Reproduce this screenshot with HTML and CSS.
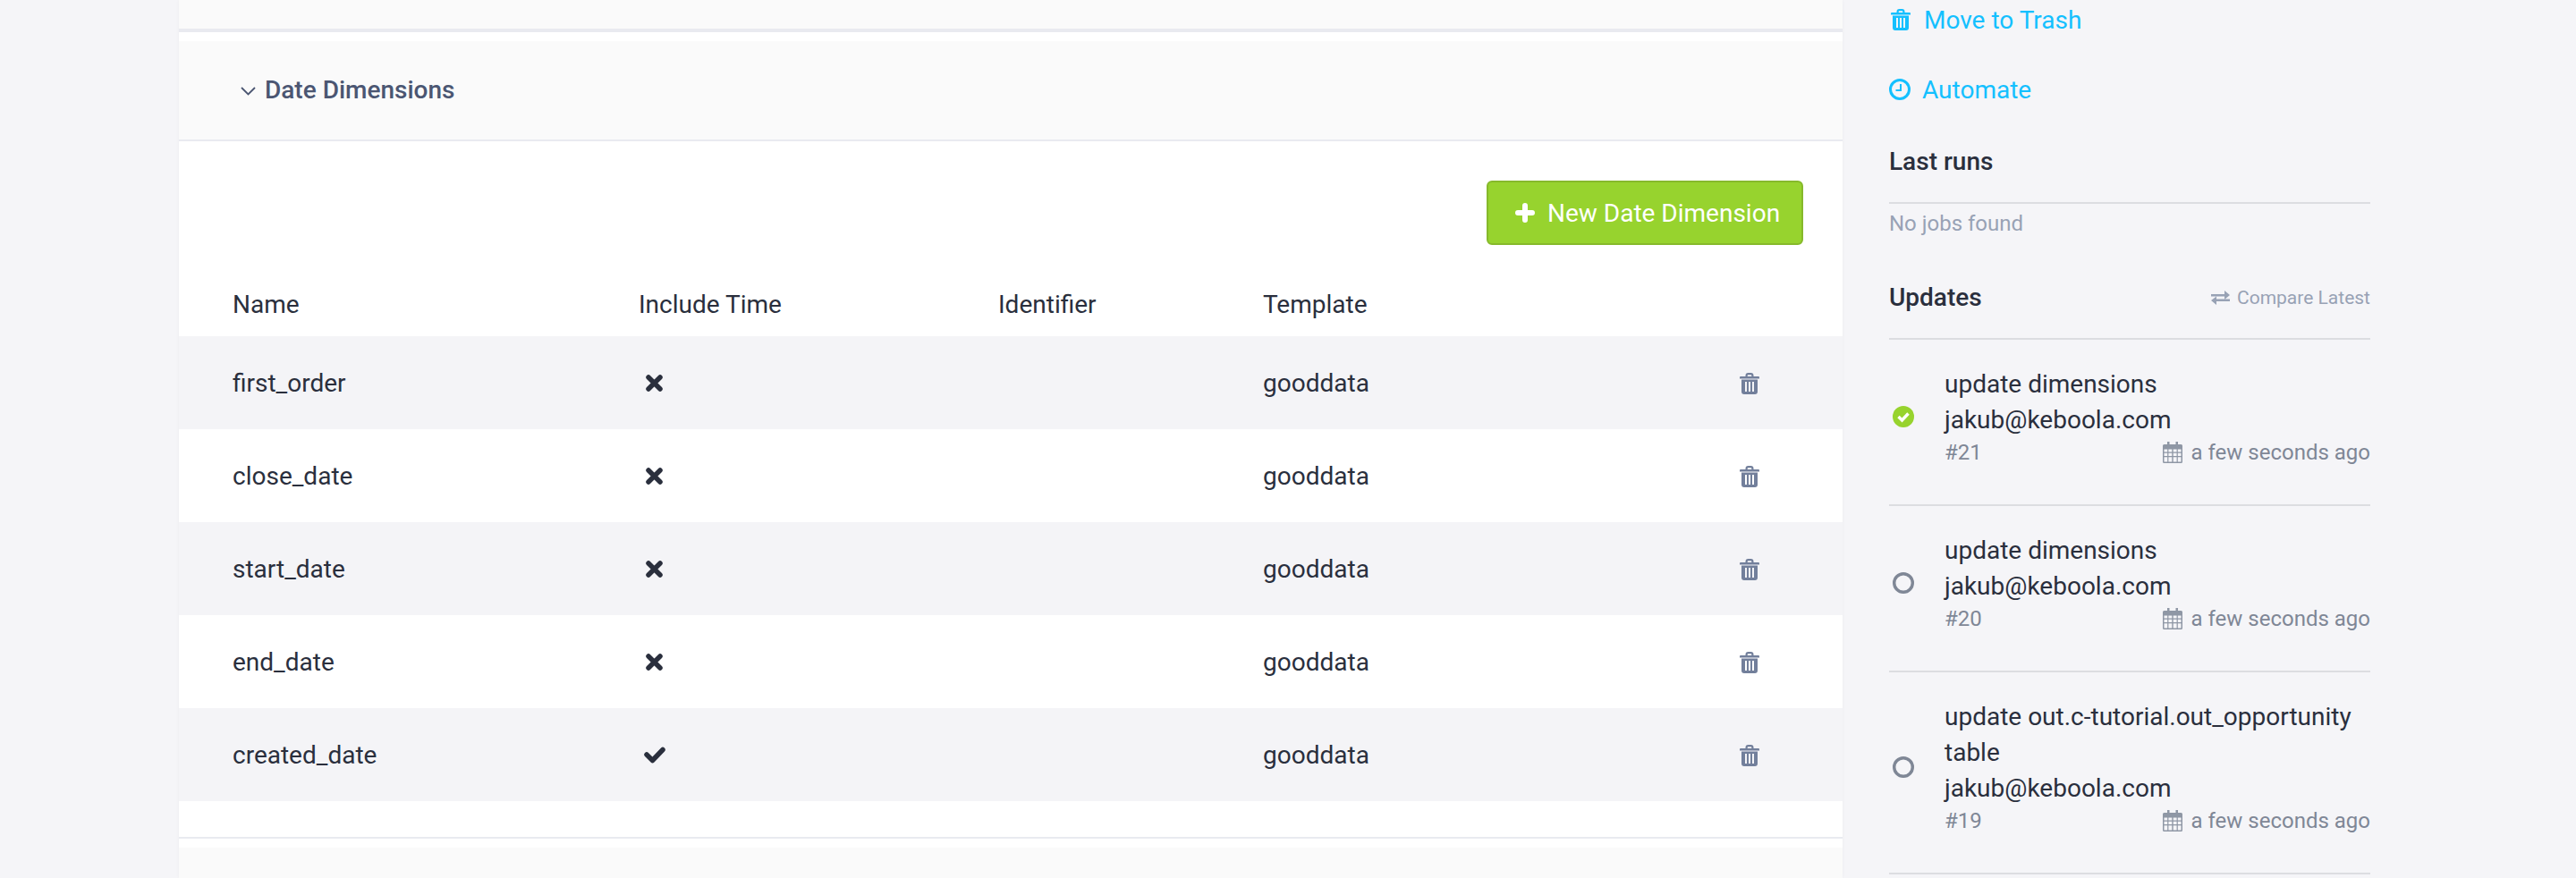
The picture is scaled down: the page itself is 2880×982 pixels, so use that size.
FILE: index.html
```html
<!DOCTYPE html>
<html lang="en">
<head>
    <meta charset="UTF-8">
    <meta name="viewport" content="width=device-width, initial-scale=1.0">
    <title>Date Dimensions</title>
    <link rel="stylesheet" href="styles.css">
</head>
<body>
    <svg class="icon-defs" aria-hidden="true">
        <symbol id="i-trash" viewBox="0 0 22 24">
            <path fill="currentColor" fill-rule="evenodd" d="M6.5 4V3A3 3 0 0 1 9.500 0h3a3 3 0 0 1 3 3v1H21a1 1 0 0 1 1 1v1.500H0V5a1 1 0 0 1 1-1zM8.700 4h4.600V3a.8.8 0 0 0-.8-.8h-3a.8.8 0 0 0-.8.8z"/>
            <path fill="currentColor" fill-rule="evenodd" d="M2 7.500h18V21a3 3 0 0 1-3 3H5a3 3 0 0 1-3-3zM6 10v11h2V10zM10 10v11h2V10zM14 10v11h2V10z"/>
        </symbol>
        <symbol id="i-calendar" viewBox="0 0 22 24">
            <path fill="currentColor" fill-rule="evenodd" d="M5 0h2.500v3h7V0H17v3h3.500A1.500 1.500 0 0 1 22 4.500v18a1.500 1.500 0 0 1-1.500 1.500h-19A1.500 1.500 0 0 1 0 22.500v-18A1.500 1.500 0 0 1 1.500 3H5zM1.500 8.500v3h3.700v-3zM6.400 8.500v3h3.900v-3zM11.700 8.500v3h3.900v-3zM16.800 8.500v3h3.700v-3zM1.500 12.800v3.200h3.700v-3.200zM6.400 12.800v3.200h3.900v-3.200zM11.700 12.800v3.200h3.900v-3.200zM16.800 12.800v3.200h3.700v-3.200zM1.500 17.300v5.200h3.700v-5.200zM6.400 17.300v5.200h3.900v-5.200zM11.700 17.300v5.200h3.900v-5.200zM16.800 17.300v5.200h3.700v-5.200z"/>
        </symbol>
        <symbol id="i-cross" viewBox="0 0 19 19">
            <path fill="none" stroke="currentColor" stroke-width="5.500" stroke-linecap="round" d="M3 3l13 13M16 3L3 16"/>
        </symbol>
        <symbol id="i-tick" viewBox="0 0 24 19">
            <path fill="none" stroke="currentColor" stroke-width="5.500" stroke-linecap="round" stroke-linejoin="round" d="M3 9l6.500 6.500L21 3.500"/>
        </symbol>
        <symbol id="i-empty" viewBox="0 0 24 24">
            <circle cx="12" cy="12" r="10.300" fill="none" stroke="currentColor" stroke-width="3.400"/>
        </symbol>
        <symbol id="i-success" viewBox="0 0 24 24">
            <circle cx="12" cy="12" r="12" fill="currentColor"/>
            <path fill="none" stroke="#fff" stroke-width="3.400" d="M6.500 12l4 4 7-7.500"/>
        </symbol>
    </svg>

    <div class="page">
        <main class="main-panel">
            <div class="panel-top"></div>

            <section class="dimensions">
                <div class="section-header">
                    <svg class="chevron" viewBox="0 0 17 10"><path fill="none" stroke="currentColor" stroke-width="1.800" d="M1 1l7.500 7.500L16 1"/></svg>
                    <h2>Date Dimensions</h2>
                </div>
                <div class="section-actions">
                    <button class="btn-new">
                        <svg class="plus" viewBox="0 0 22 22"><path fill="none" stroke="currentColor" stroke-width="6" stroke-linecap="round" d="M11 3v16M3 11h16"/></svg>
                        New Date Dimension
                    </button>
                </div>

                <div class="dim-row dim-head">
                    <div>Name</div>
                    <div>Include Time</div>
                    <div>Identifier</div>
                    <div>Template</div>
                </div>
                <div class="dim-row">
                    <div>first_order</div>
                    <div><svg class="bool cross"><use href="#i-cross"/></svg></div>
                    <div></div>
                    <div>gooddata</div>
                    <svg class="row-trash"><use href="#i-trash"/></svg>
                </div>
                <div class="dim-row">
                    <div>close_date</div>
                    <div><svg class="bool cross"><use href="#i-cross"/></svg></div>
                    <div></div>
                    <div>gooddata</div>
                    <svg class="row-trash"><use href="#i-trash"/></svg>
                </div>
                <div class="dim-row">
                    <div>start_date</div>
                    <div><svg class="bool cross"><use href="#i-cross"/></svg></div>
                    <div></div>
                    <div>gooddata</div>
                    <svg class="row-trash"><use href="#i-trash"/></svg>
                </div>
                <div class="dim-row">
                    <div>end_date</div>
                    <div><svg class="bool cross"><use href="#i-cross"/></svg></div>
                    <div></div>
                    <div>gooddata</div>
                    <svg class="row-trash"><use href="#i-trash"/></svg>
                </div>
                <div class="dim-row">
                    <div>created_date</div>
                    <div><svg class="bool tick"><use href="#i-tick"/></svg></div>
                    <div></div>
                    <div>gooddata</div>
                    <svg class="row-trash"><use href="#i-trash"/></svg>
                </div>
            </section>

            <div class="panel-bottom"></div>
        </main>

        <aside class="sidebar">
            <a class="action action-trash"><svg class="action-icon"><use href="#i-trash"/></svg>Move to Trash</a>
            <a class="action action-clock">
                <svg class="action-icon clock" viewBox="0 0 24 24"><circle cx="12" cy="12" r="10.500" fill="none" stroke="currentColor" stroke-width="3"/><path fill="none" stroke="currentColor" stroke-width="2" d="M13 6v7H7.500"/></svg>
                Automate
            </a>

            <h3 class="side-title runs-title">Last runs</h3>
            <div class="empty-note">No jobs found</div>

            <div class="side-title updates-title">
                <h3>Updates</h3>
                <a class="compare">
                    <svg class="compare-icon" viewBox="0 0 21 16"><path fill="currentColor" d="M0 4h15V0l6 5-6 5V6.500H0zM21 9.500H6V6.500v0L0 11l6 5v-4h15z"/></svg>
                    Compare Latest
                </a>
            </div>

            <div class="update">
                <svg class="status ok"><use href="#i-success"/></svg>
                <div class="update-body">
                    <div>update dimensions</div>
                    <div>jakub@keboola.com</div>
                    <div class="update-meta">
                        <span>#21</span>
                        <span class="when"><svg class="calendar"><use href="#i-calendar"/></svg>a few seconds ago</span>
                    </div>
                </div>
            </div>
            <div class="update">
                <svg class="status"><use href="#i-empty"/></svg>
                <div class="update-body">
                    <div>update dimensions</div>
                    <div>jakub@keboola.com</div>
                    <div class="update-meta">
                        <span>#20</span>
                        <span class="when"><svg class="calendar"><use href="#i-calendar"/></svg>a few seconds ago</span>
                    </div>
                </div>
            </div>
            <div class="update">
                <svg class="status"><use href="#i-empty"/></svg>
                <div class="update-body">
                    <div>update out.c-tutorial.out_opportunity table</div>
                    <div>jakub@keboola.com</div>
                    <div class="update-meta">
                        <span>#19</span>
                        <span class="when"><svg class="calendar"><use href="#i-calendar"/></svg>a few seconds ago</span>
                    </div>
                </div>
            </div>
        </aside>
    </div>
</body>
</html>
```

FILE: styles.css
```css
:root {
    --page: #f5f5f8;
    --ink: #2a2f3d;
    --muted: #98a2b5;
    --grey: #7f8796;
    --slate: #727f9b;
    --link: #14c0ff;
    --rule: #dcdde1;
    --panel-rule: #e9eaf0;
    --soft: #fafafa;
}

* {
    margin: 0;
    padding: 0;
    box-sizing: border-box;
    font-family: Roboto, sans-serif;
}

body {
    background: var(--page);
    color: var(--ink);
    height: 982px;
    overflow: hidden;
}

.icon-defs {
    position: absolute;
    width: 0;
    height: 0;
}

.page {
    display: flex;
    padding-left: 200px;
}

/* Main panel */
.main-panel {
    width: 1860px;
    background: white;
    flex-shrink: 0;
    box-shadow: 0 0 4px rgba(0,0,0,0.04);
}

.panel-top {
    height: 36px;
    background: var(--soft);
    border-bottom: 4px solid var(--panel-rule);
}

.dimensions {
    padding-top: 10px;
    padding-bottom: 40px;
    border-bottom: 2px solid var(--panel-rule);
}

.section-header {
    height: 112px;
    background: var(--soft);
    border-bottom: 2px solid var(--panel-rule);
    display: flex;
    align-items: center;
    padding-left: 69px;
    padding-bottom: 2px;
    color: #4b5672;
}

.chevron {
    width: 17px;
    height: 10px;
    margin-right: 10px;
    margin-top: 3px;
}

.section-header h2 {
    font-size: 28px;
    font-weight: 500;
}

.section-actions {
    display: flex;
    justify-content: flex-end;
    padding: 44px 44px 0 0;
    height: 158px;
}

.btn-new {
    width: 354px;
    height: 72px;
    background: #97d32e;
    color: white;
    border: 2px solid #86b92b;
    border-radius: 6px;
    font-size: 28px;
    display: flex;
    align-items: center;
    padding-left: 30px;
    gap: 14px;
}

.plus {
    width: 22px;
    height: 22px;
}

.dim-row {
    display: grid;
    grid-template-columns: 454px 402px 296px 1fr 22px;
    align-items: center;
    height: 104px;
    padding: 0 93px 0 60px;
    font-size: 28px;
}

.dim-row:nth-of-type(even) {
    background: #f4f4f7;
}

.dim-head {
    height: 60px;
    padding-top: 8px;
    align-items: start;
    background: white;
}

.bool {
    display: block;
    color: var(--ink);
    height: 19px;
}

.bool.cross {
    width: 19px;
    margin-left: 8px;
}

.bool.tick {
    width: 24px;
    margin-left: 6px;
}

.row-trash {
    width: 22px;
    height: 24px;
    color: var(--slate);
    margin-top: 2px;
}

.panel-bottom {
    height: 34px;
    margin-top: 10px;
    background: var(--soft);
}

/* Sidebar */
.sidebar {
    width: 538px;
    margin-left: 52px;
    flex-shrink: 0;
    font-size: 28px;
}

.action {
    display: flex;
    align-items: center;
    height: 40px;
    color: var(--link);
}

.action-trash {
    margin-top: 2px;
    margin-bottom: 38px;
}

.action-icon {
    width: 22px;
    height: 24px;
    margin-left: 2px;
    margin-right: 15px;
}

.action-icon.clock {
    width: 24px;
    margin-left: 0;
    margin-right: 13px;
}

.side-title {
    font-size: 28px;
    font-weight: 500;
    line-height: 40px;
}

.runs-title {
    margin-top: 41px;
    padding-bottom: 25px;
    border-bottom: 2px solid var(--rule);
}

.empty-note {
    font-size: 24px;
    line-height: 32px;
    color: var(--muted);
    margin-top: 6px;
}

.updates-title {
    display: flex;
    justify-content: space-between;
    align-items: flex-start;
    margin-top: 47px;
    padding-bottom: 25px;
    border-bottom: 2px solid var(--rule);
}

.updates-title h3 {
    font-size: 28px;
    font-weight: 500;
}

.compare {
    font-size: 21px;
    font-weight: 400;
    color: var(--muted);
    display: flex;
    align-items: center;
    gap: 8px;
}

.compare-icon {
    width: 21px;
    height: 16px;
}

.update {
    display: flex;
    align-items: center;
    padding: 30px 0 42px;
    border-bottom: 2px solid var(--rule);
    line-height: 40px;
}

.status {
    width: 24px;
    height: 24px;
    margin-left: 4px;
    margin-right: 34px;
    color: var(--grey);
    flex-shrink: 0;
}

.status.ok {
    color: #97d32e;
}

.update-body {
    flex: 1;
}

.update-meta {
    display: flex;
    justify-content: space-between;
    font-size: 24px;
    line-height: 32px;
    color: var(--grey);
}

.when {
    display: flex;
    align-items: center;
}

.calendar {
    width: 22px;
    height: 24px;
    margin-right: 10px;
    color: #8f97a5;
}
```
